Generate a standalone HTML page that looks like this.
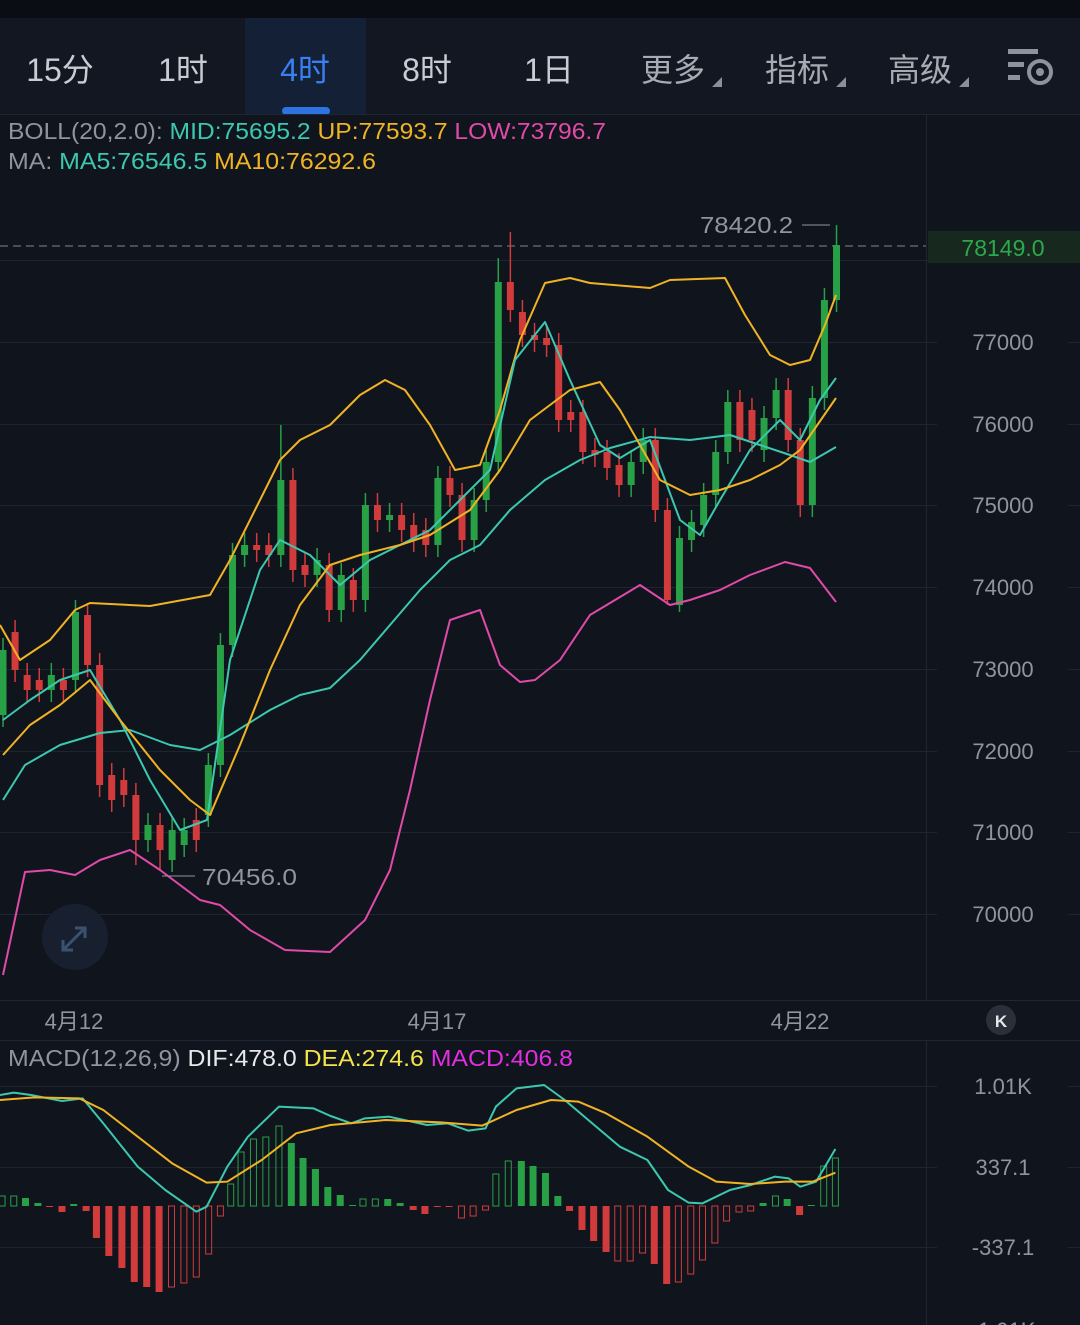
<!DOCTYPE html>
<html><head><meta charset="utf-8">
<style>
html,body{margin:0;padding:0;background:#10141d;width:1080px;height:1325px;overflow:hidden}
svg{display:block}
text{font-family:"Liberation Sans","Noto Sans CJK SC",sans-serif}
</style></head><body>
<svg id="s" width="1080" height="1325" xmlns="http://www.w3.org/2000/svg">
<rect width="1080" height="1325" fill="#10141d"/>
<rect width="1080" height="18" fill="#0a0d13"/>
<rect y="18" width="1080" height="96" fill="#121722"/>
<rect x="245" y="18" width="121" height="96" fill="#142036"/>
<rect x="282" y="107" width="48" height="8" rx="4" fill="#2d74e0"/>
<line x1="0" y1="114.5" x2="1080" y2="114.5" stroke="#1f2633"/>
<g font-size="32" fill="#c9ccd2" text-anchor="middle">
<text x="60" y="81">15分</text><text x="183" y="81">1时</text>
<text x="305" y="81" fill="#3a7ff0">4时</text><text x="427" y="81">8时</text>
<text x="549" y="81">1日</text>
<text x="673" y="81" fill="#a7abb3">更多</text><text x="797" y="81" fill="#a7abb3">指标</text><text x="920" y="81" fill="#a7abb3">高级</text>
</g>
<g fill="#8a8f98"><path d="M712 87l10-10v10z"/><path d="M836 87l10-10v10z"/><path d="M959 87l10-10v10z"/></g>
<g fill="#8d939c"><rect x="1008" y="49" width="30" height="5"/><rect x="1008" y="62" width="16" height="5"/><rect x="1008" y="75" width="12" height="5"/>
<circle cx="1040" cy="72" r="11" fill="none" stroke="#8d939c" stroke-width="4"/><circle cx="1040" cy="72" r="4"/></g>
<line x1="926.5" y1="115" x2="926.5" y2="1000" stroke="#1f2633"/>
<line x1="926.5" y1="1040" x2="926.5" y2="1325" stroke="#1f2633"/>
<g font-size="23">
<text x="8" y="139" fill="#8f959e" textLength="598" lengthAdjust="spacingAndGlyphs">BOLL(20,2.0): <tspan fill="#3cc8b0">MID:75695.2</tspan> <tspan fill="#f0b323">UP:77593.7</tspan> <tspan fill="#e04aa8">LOW:73796.7</tspan></text>
<text x="8" y="169" fill="#8f959e" textLength="368" lengthAdjust="spacingAndGlyphs">MA: <tspan fill="#3cc8b0">MA5:76546.5</tspan> <tspan fill="#f0b323">MA10:76292.6</tspan></text>
</g>
<g id="grid" stroke="#1e2430" stroke-width="1"></g>
<g id="axis" font-size="22" fill="#8f959e" text-anchor="middle"></g>
<circle cx="75" cy="937" r="33" fill="#182030"/>
<g stroke="#3a5270" stroke-width="3" fill="none"><path d="M63 950l22-22M63 940v10h10M85 938v-10h-10"/></g>
<line x1="0" y1="246" x2="926" y2="246" stroke="#5a606a" stroke-dasharray="8,5" stroke-width="1.5"/>
<rect x="928" y="231" width="152" height="32" fill="#17281e"/>
<text x="1003" y="256" font-size="23" fill="#2ea84c" text-anchor="middle">78149.0</text>
<g id="cand"></g>
<g id="lines" fill="none" stroke-width="2"></g>
<text x="700" y="233" font-size="23" fill="#8f959e" textLength="93" lengthAdjust="spacingAndGlyphs">78420.2</text>
<line x1="802" y1="225" x2="830" y2="225" stroke="#8f959e"/>
<line x1="162" y1="876" x2="195" y2="876" stroke="#8f959e"/>
<text x="202" y="885" font-size="23" fill="#8f959e" textLength="95" lengthAdjust="spacingAndGlyphs">70456.0</text>
<line x1="0" y1="1000.5" x2="1080" y2="1000.5" stroke="#1f2633"/>
<line x1="0" y1="1040.5" x2="1080" y2="1040.5" stroke="#1f2633"/>
<g font-size="22" fill="#8f959e" text-anchor="middle"><text x="74" y="1029">4月12</text><text x="437" y="1029">4月17</text><text x="800" y="1029">4月22</text></g>
<circle cx="1001" cy="1020" r="15" fill="#2a2f3a"/>
<text x="1001" y="1027" font-size="17" fill="#e6e8ec" text-anchor="middle" font-weight="bold">K</text>
<text x="8" y="1066" font-size="23" fill="#8f959e" textLength="565" lengthAdjust="spacingAndGlyphs">MACD(12,26,9) <tspan fill="#e6e8ec">DIF:478.0</tspan> <tspan fill="#f2e34a">DEA:274.6</tspan> <tspan fill="#e02ee0">MACD:406.8</tspan></text>
<g id="macd"></g>
</svg>
<script>
var NS="http://www.w3.org/2000/svg";
function el(p,t,a){var e=document.createElementNS(NS,t);for(var k in a)e.setAttribute(k,a[k]);document.getElementById(p).appendChild(e);return e;}
[260,342,424,505,587,669,751,832,914].forEach(function(y){el("grid","line",{x1:0,y1:y+.5,x2:937,y2:y+.5});el("grid","line",{x1:1068,y1:y+.5,x2:1080,y2:y+.5});});
[1086,1167,1247].forEach(function(y){el("grid","line",{x1:0,y1:y+.5,x2:937,y2:y+.5});el("grid","line",{x1:1068,y1:y+.5,x2:1080,y2:y+.5});});
var lab=[[342,"77000"],[424,"76000"],[505,"75000"],[587,"74000"],[669,"73000"],[751,"72000"],[832,"71000"],[914,"70000"]];
lab.forEach(function(l){var t=el("axis","text",{x:1003,y:l[0]+8});t.textContent=l[1];});
[[1086,"1.01K"],[1167,"337.1"],[1247,"-337.1"],[1330,"-1.01K"]].forEach(function(l){var t=el("axis","text",{x:1003,y:l[0]+8});t.textContent=l[1];});
var C=[[650,715,1],[632,670,0],[675,690,0],[680,690,0],[675,690,1],[680,690,0],[612,680,1],[615,665,0],[665,785,0],[775,800,0],[780,795,0],[795,840,0],[825,840,1],[825,850,0],[830,860,1],[830,845,1],[820,840,0],[765,815,1],[645,765,1],[555,645,1],[545,555,1],[545,550,0],[545,555,0],[480,555,1],[480,570,0],[565,575,0],[560,575,1],[565,610,0],[575,610,1],[580,600,0],[505,600,1],[505,520,0],[515,520,1],[515,530,0],[525,540,0],[530,545,0],[478,545,1],[478,495,0],[495,540,0],[500,540,1],[462,500,1],[282,462,1],[282,310,0],[312,335,0],[335,340,0],[338,345,0],[345,420,0],[412,420,0],[412,452,0],[450,455,0],[452,468,0],[465,485,0],[462,485,1],[440,462,1],[440,510,0],[510,600,0],[538,605,1],[522,540,1],[495,525,1],[452,495,1],[402,452,1],[402,440,0],[410,440,0],[418,450,1],[390,418,1],[390,440,0],[440,505,0],[398,505,1],[300,398,1],[245,300,1]];
var hi={23:425,41:258,42:232,69:225,13:870,55:605,56:612,11:865};
C.forEach(function(c,i){var x=3+12.08*i,col=c[2]?"#27a046":"#d13b3b";var t=c[0]-(hi[i]&&hi[i]<c[0]?c[0]-hi[i]:12),b=c[1]+(hi[i]&&hi[i]>c[1]?hi[i]-c[1]:12);
el("cand","line",{x1:x,y1:t,x2:x,y2:b,stroke:col,"stroke-width":1.5});el("cand","rect",{x:x-3.5,y:c[0],width:7,height:Math.max(2,c[1]-c[0]),fill:col});});
function pl(g,pts,col,w){el(g,"polyline",{points:pts.map(function(p){return p[0]+","+p[1]}).join(" "),stroke:col,"stroke-width":w||2,fill:"none","stroke-linejoin":"round"});}
pl("lines",[[0,625],[20,660],[50,640],[75,610],[90,603],[150,606],[210,595],[230,560],[280,460],[300,440],[330,425],[360,395],[385,380],[405,390],[430,425],[455,470],[480,465],[500,410],[520,340],[545,283],[570,278],[590,283],[650,288],[670,280],[725,278],[745,315],[770,355],[790,365],[810,360],[825,325],[836,295]],"#f0b323");
pl("lines",[[3,975],[25,872],[50,870],[75,875],[100,860],[130,850],[160,870],[200,900],[220,905],[250,930],[285,950],[330,952],[365,920],[390,870],[410,790],[430,700],[450,620],[480,610],[500,665],[520,682],[535,680],[560,660],[590,615],[640,585],[670,605],[690,600],[720,590],[750,575],[785,562],[810,568],[836,602]],"#e04aa8");
pl("lines",[[3,800],[25,765],[60,745],[100,733],[130,730],[170,745],[200,750],[230,735],[270,710],[300,695],[330,688],[360,660],[390,625],[420,590],[450,560],[480,545],[510,510],[545,480],[580,460],[610,448],[650,437],[690,440],[730,435],[760,445],[790,455],[810,462],[836,447]],"#3cc8b0");
pl("lines",[[3,720],[30,700],[60,680],[90,670],[120,720],[150,780],[180,830],[207,820],[230,660],[260,570],[280,540],[310,555],[340,585],[370,560],[400,545],[430,530],[460,500],[490,470],[515,360],[545,322],[570,380],[600,445],[620,458],[650,440],[680,520],[700,535],[720,500],[750,450],[780,420],[800,440],[820,400],[836,378]],"#3cc8b0");
pl("lines",[[3,755],[30,725],[60,705],[90,680],[120,720],[160,770],[190,800],[210,815],[240,745],[270,670],[300,605],[330,565],[360,555],[400,545],[430,535],[470,510],[500,470],[530,420],[570,390],[600,382],[620,410],[660,480],[690,495],[720,490],[750,480],[780,465],[800,450],[836,398]],"#f0b323");
var B=[[3,10,1],[20,10,1],[37,8,0],[55,3,0],[72,-1,0],[90,-6,0],[107,2,0],[125,-5,0],[140,-32,0],[158,-50,0],[177,-62,0],[195,-76,0],[213,-81,0],[231,-86,0],[249,-81,1],[267,-77,1],[285,-71,1],[303,-48,1],[320,-10,1],[335,22,1],[350,54,1],[368,67,1],[386,69,1],[405,80,1],[423,63,0],[440,48,0],[458,37,0],[476,19,0],[494,11,0],[512,1,0],[527,7,1],[545,7,1],[563,7,0],[581,3,0],[600,-4,0],[617,-8,0],[635,-1,0],[652,-1,0],[670,-12,1],[687,-10,1],[705,-4,1],[720,32,1],[738,45,1],[757,45,0],[774,40,0],[792,33,0],[810,10,0],[827,-5,0],[845,-24,0],[862,-35,0],[880,-46,0],[897,-55,1],[915,-55,1],[933,-47,1],[950,-58,0],[968,-78,0],[985,-76,1],[1003,-68,1],[1020,-54,1],[1038,-37,1],[1055,-15,1],[1073,-6,1],[1090,-5,1],[1108,3,0],[1126,10,1],[1143,7,0],[1161,-9,0],[1178,1,0],[1196,40,1],[1213,48,1]];
var Z=1206;
B.forEach(function(b){var x=b[0]/1.452,h=b[1],col=h>=0?"#27a046":"#d13b3b",y=h>=0?Z-h:Z,hh=Math.max(1,Math.abs(h));
if(b[2])el("macd","rect",{x:x-3,y:y,width:6,height:hh,fill:"none",stroke:col,"stroke-width":1});else el("macd","rect",{x:x-3.5,y:y,width:7,height:hh,fill:col});});
function zp(a){return a.map(function(p){return [p[0]/1.452,990+p[1]/3]});}
pl("macd",zp([[0,315],[20,308],[45,315],[90,333],[120,325],[150,400],[200,530],[240,600],[285,665],[300,650],[330,530],[360,440],[405,350],[455,355],[480,378],[510,400],[530,385],[565,380],[620,405],[650,400],[680,422],[705,415],[720,350],[750,295],[790,285],[820,330],[860,400],[900,470],[940,510],[970,600],[1000,638],[1020,640],[1060,600],[1090,585],[1125,560],[1145,565],[1162,590],[1185,575],[1213,477]]),"#3cc8b0");
pl("macd",zp([[0,330],[50,322],[115,325],[150,360],[200,440],[250,520],[300,578],[330,575],[380,510],[430,430],[480,405],[560,390],[640,397],[700,407],[750,360],[800,330],[840,335],[880,370],[940,440],[1000,530],[1040,575],[1090,582],[1140,575],[1180,575],[1213,548]]),"#f0b323");
</script>
</body></html>
